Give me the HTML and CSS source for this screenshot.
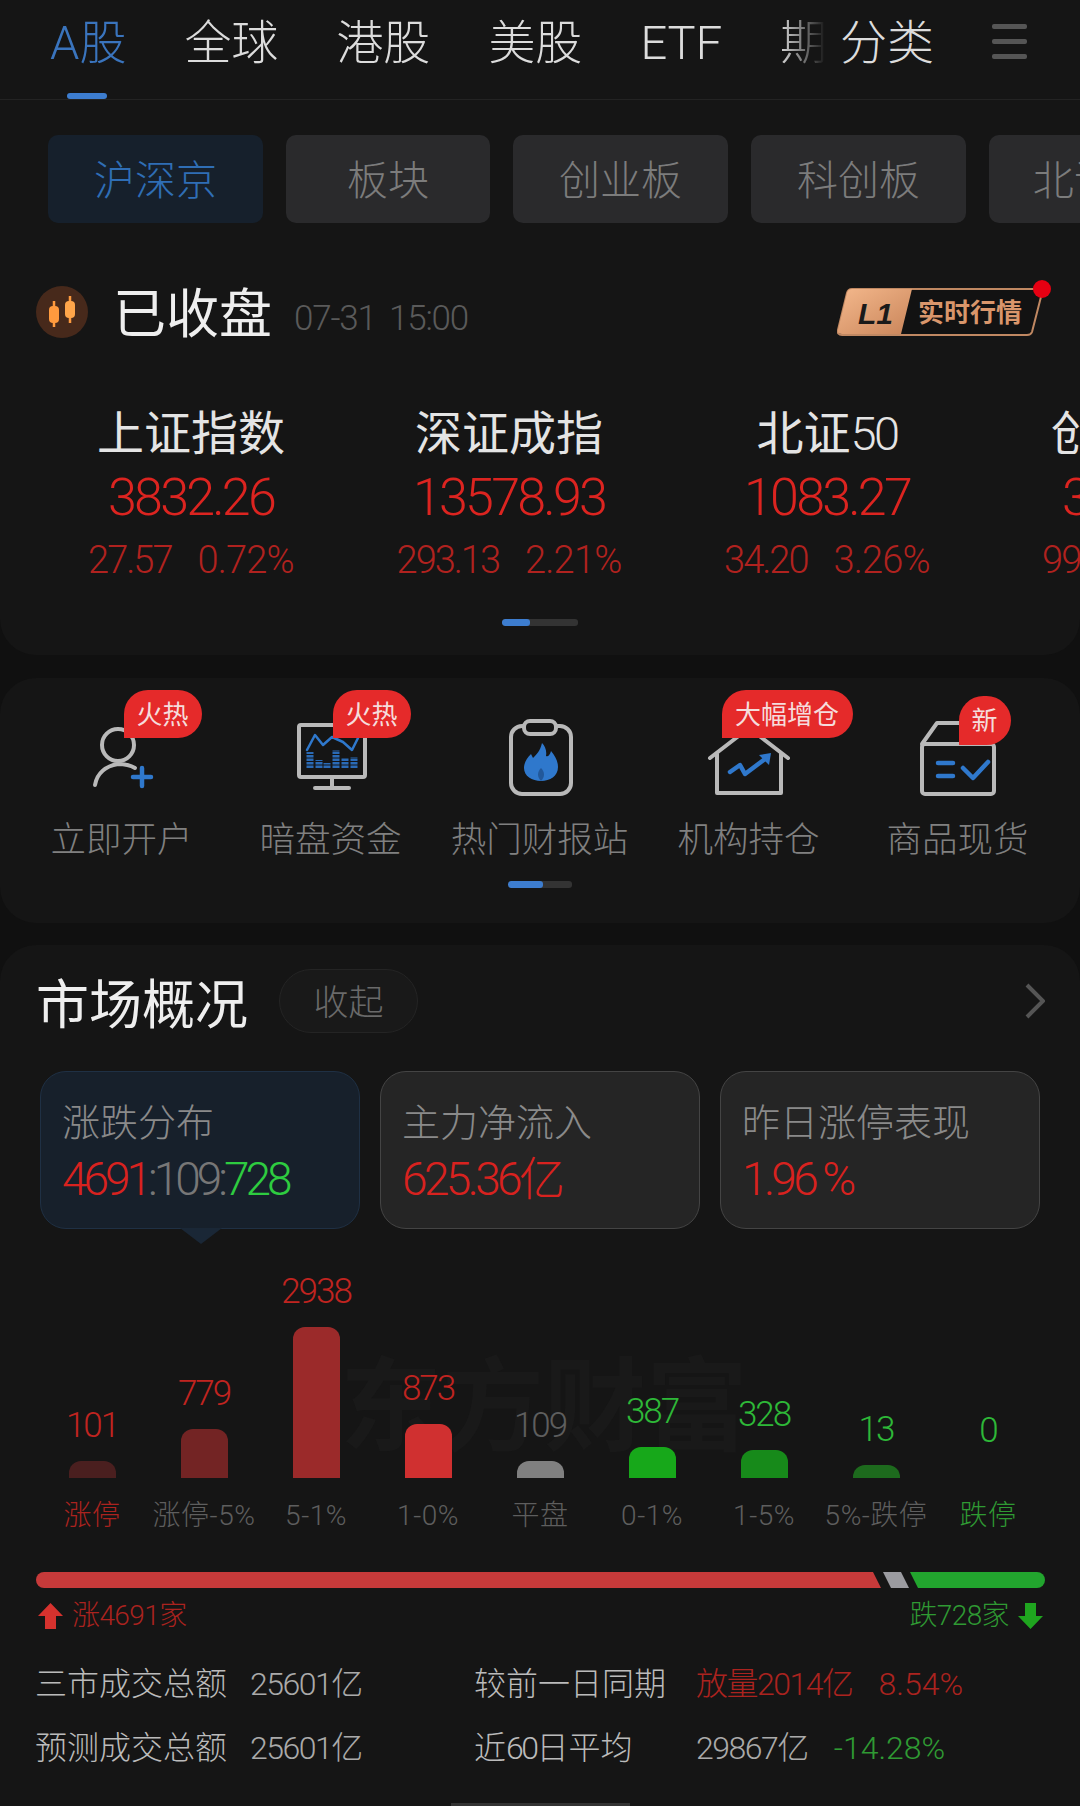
FILE: index.html
```html
<!DOCTYPE html>
<html lang="zh-CN">
<head>
    <meta charset="UTF-8">
    <meta name="viewport" content="width=device-width, initial-scale=1.0">
    <title>行情</title>
    <link rel="stylesheet" href="styles.css">
</head>
<body>
<div class="page">

    <!-- Index card -->
    <section class="card card-top">
        <nav class="market-tabs">
            <div class="tabs-scroll">
                <span class="tab active">A股</span>
                <span class="tab">全球</span>
                <span class="tab">港股</span>
                <span class="tab">美股</span>
                <span class="tab">ETF</span>
                <span class="tab">期货</span>
            </div>
            <span class="tab tab-more">分类</span>
            <div class="hamburger"><i></i><i></i><i></i></div>
        </nav>

        <div class="sub-tabs">
            <span class="sub-tab active">沪深京</span>
            <span class="sub-tab w-204">板块</span>
            <span class="sub-tab">创业板</span>
            <span class="sub-tab">科创板</span>
            <span class="sub-tab">北证50</span>
        </div>

        <div class="status">
            <svg class="candle-icon" viewBox="0 0 52 52">
                <circle cx="26" cy="26" r="26" fill="#47291b"/>
                <path d="M18 15V41M34 10V37" stroke="#ff9a3e" stroke-width="2.5"/>
                <rect x="13" y="20" width="10" height="17" rx="4" fill="#ff9a3e"/>
                <rect x="29" y="15" width="10" height="17" rx="4" fill="#ffa54a"/>
            </svg>
            <span class="status-text">已收盘</span>
            <span class="status-time">07-31 15:00</span>
            <svg class="l1-badge" viewBox="0 0 214 56">
                <defs>
                    <linearGradient id="l1fill" x1="0" y1="0" x2="1" y2="1">
                        <stop offset="0" stop-color="#f4b88c"/>
                        <stop offset="1" stop-color="#c9855a"/>
                    </linearGradient>
                </defs>
                <path d="M15 9H206L195 52Q194 55 190 55H5Q0 55 1 50L10 13Q11 9 15 9Z" fill="#121212" stroke="#c08862" stroke-width="2"/>
                <path d="M15 9H75L64 54H5Q0 54 1 50L10 13Q11 9 15 9Z" fill="url(#l1fill)"/>
                <text x="21" y="44" class="l1-mark">L1</text>
                <text x="81" y="42" class="l1-text">实时行情</text>
                <circle cx="205" cy="9" r="9" fill="#e60012"/>
            </svg>
        </div>

        <div class="indexes">
            <div class="index">
                <div class="index-name">上证指数</div>
                <div class="index-value">3832.26</div>
                <div class="index-change"><span>27.57</span><span>0.72%</span></div>
            </div>
            <div class="index">
                <div class="index-name">深证成指</div>
                <div class="index-value">13578.93</div>
                <div class="index-change"><span>293.13</span><span>2.21%</span></div>
            </div>
            <div class="index">
                <div class="index-name">北证<span class="tight">50</span></div>
                <div class="index-value">1083.27</div>
                <div class="index-change"><span>34.20</span><span>3.26%</span></div>
            </div>
            <div class="index">
                <div class="index-name">创业板指</div>
                <div class="index-value">3142.88</div>
                <div class="index-change"><span>99.18</span><span>3.26%</span></div>
            </div>
        </div>

        <div class="pager pager-wide"><i></i></div>
    </section>

    <!-- Shortcuts -->
    <section class="card card-nav">
        <div class="nav-grid">
            <div class="nav-item">
                <span class="badge">火热</span>
                <svg class="nav-icon" viewBox="0 0 100 80">
                    <circle cx="46" cy="27" r="16" class="line"/>
                    <path d="M23 67C25 55 34 48 46 46C52 46 58 47 63 50" class="line"/>
                    <path d="M61 59H79M70 50V68" class="blue"/>
                </svg>
                <span class="nav-label">立即开户</span>
            </div>
            <div class="nav-item">
                <span class="badge">火热</span>
                <svg class="nav-icon" viewBox="0 0 100 80">
                    <rect x="18" y="7" width="66" height="52" rx="2" class="line"/>
                    <path d="M51 59V70M34 70H68" class="line"/>
                    <path d="M26 32L34 17L42 27L51 19L62 24L71 32L77 20" class="blue thin"/>
                    <path d="M29 50V34M38 50V42M46 50V45M55 50V32M64 50V40M73 50V39" class="eq"/>
                </svg>
                <span class="nav-label">暗盘资金</span>
            </div>
            <div class="nav-item">
                <svg class="nav-icon" viewBox="0 0 100 80">
                    <rect x="21" y="8" width="60" height="68" rx="11" class="line"/>
                    <rect x="34" y="3" width="32" height="13" rx="6" class="line" fill="#151515"/>
                    <path d="M52 25C50 33 47 36 43 40L41 36C36 41 34 46 34 50C34 58 42 63 51 63C60 63 68 58 68 49C68 43 65 38 61 33C60 37 58 39 56 38C57 33 55 28 52 25Z" fill="#2f78cc"/>
                    <path d="M51 63C47 59 47 54 51 50C55 54 55 59 51 63Z" fill="#22589a"/>
                </svg>
                <span class="nav-label">热门财报站</span>
            </div>
            <div class="nav-item">
                <span class="badge badge-wide">大幅增仓</span>
                <svg class="nav-icon" viewBox="0 0 100 80">
                    <path d="M11 40L50 10L89 40M18 36V75H82V36" class="line"/>
                    <path d="M31 54L41 47L46 56L66 41" class="blue"/>
                    <path d="M60 37L72 35L70 47Z" fill="#2f78cc"/>
                </svg>
                <span class="nav-label">机构持仓</span>
            </div>
            <div class="nav-item">
                <span class="badge badge-new">新</span>
                <svg class="nav-icon" viewBox="0 0 100 80">
                    <rect x="14" y="26" width="72" height="50" rx="3" class="line"/>
                    <path d="M14 26L29 5H62" class="line"/>
                    <path d="M30 45H45M30 58H45M55 50L65 60L80 44" class="blue"/>
                </svg>
                <span class="nav-label">商品现货</span>
            </div>
        </div>
        <div class="pager pager-nav"><i></i></div>
    </section>

    <!-- Market overview -->
    <section class="card card-market">
        <header class="market-head">
            <h2>市场概况</h2>
            <span class="collapse-btn">收起</span>
            <svg class="chevron" viewBox="0 0 20 36"><path d="M2 2L18 18L2 34" fill="none" stroke="#555" stroke-width="4"/></svg>
        </header>

        <div class="stats">
            <div class="stat active">
                <div class="stat-title">涨跌分布</div>
                <div class="stat-value"><span class="red">4691</span><span class="gray">:109:</span><span class="green">728</span></div>
            </div>
            <div class="stat">
                <div class="stat-title">主力净流入</div>
                <div class="stat-value red">625.36亿</div>
            </div>
            <div class="stat">
                <div class="stat-title">昨日涨停表现</div>
                <div class="stat-value red">1.96<span class="pct">%</span></div>
            </div>
        </div>

        <div class="chart">
            <div class="watermark">东方财富</div>
            <div class="col"><span class="col-value c-red">101</span><i class="bar" style="height:17px;background:#4a1f1f"></i><span class="col-label c-red">涨停</span></div>
            <div class="col"><span class="col-value c-red">779</span><i class="bar" style="height:49px;background:#732424"></i><span class="col-label">涨停-5%</span></div>
            <div class="col"><span class="col-value c-red">2938</span><i class="bar" style="height:151px;background:#9b2a2a"></i><span class="col-label">5-1%</span></div>
            <div class="col"><span class="col-value c-red">873</span><i class="bar" style="height:54px;background:#d03030"></i><span class="col-label">1-0%</span></div>
            <div class="col"><span class="col-value c-gray">109</span><i class="bar" style="height:17px;background:#808080"></i><span class="col-label">平盘</span></div>
            <div class="col"><span class="col-value c-green">387</span><i class="bar" style="height:31px;background:#17a81a"></i><span class="col-label">0-1%</span></div>
            <div class="col"><span class="col-value c-green">328</span><i class="bar" style="height:28px;background:#178a1a"></i><span class="col-label">1-5%</span></div>
            <div class="col"><span class="col-value c-green">13</span><i class="bar" style="height:13px;background:#1d6a1d"></i><span class="col-label">5%-跌停</span></div>
            <div class="col"><span class="col-value c-green">0</span><i class="bar" style="height:12px"></i><span class="col-label c-green">跌停</span></div>
        </div>

        <div class="ratio-bar">
            <i class="ratio-up"></i>
            <i class="ratio-flat"></i>
            <i class="ratio-down"></i>
        </div>

        <div class="counts">
            <div class="count c-red">
                <svg class="arrow" viewBox="0 0 25 26"><path d="M12.5 0L25 13H18V26H7V13H0Z" fill="#d6322e"/></svg>
                <span>涨4691家</span>
            </div>
            <div class="count c-green">
                <span>跌728家</span>
                <svg class="arrow" viewBox="0 0 25 26"><path d="M12.5 26L25 13H18V0H7V13H0Z" fill="#1fa51f"/></svg>
            </div>
        </div>

        <div class="turnover">
            <span class="t-label">三市成交总额</span>
            <span class="t-num">25601亿</span>
            <span class="t-label">较前一日同期</span>
            <span class="t-num t-pair"><span class="c-red">放量2014亿</span><span class="c-red t-wide">8.54%</span></span>
            <span class="t-label">预测成交总额</span>
            <span class="t-num">25601亿</span>
            <span class="t-label">近<span class="tight">60</span>日平均</span>
            <span class="t-num t-pair"><span>29867亿</span><span class="c-green t-wide">-14.28%</span></span>
        </div>

        <div class="home-bar"></div>
    </section>
</div>
</body>
</html>
```

FILE: styles.css
```css
* {
    margin: 0;
    padding: 0;
    box-sizing: border-box;
}

body {
    background-color: #101010;
    color: #ddd;
    font-family: Roboto, "Noto Sans CJK SC", sans-serif;
    font-weight: 300;
}

i {
    display: block;
}

.page {
    width: 1080px;
    height: 1806px;
    overflow: hidden;
}

.card {
    background-color: #151515;
    border-radius: 36px;
}

.card-top {
    height: 655px;
    border-radius: 0 0 36px 36px;
    overflow: hidden;
}

.tight {
    font-weight: 300;
    letter-spacing: -2.5px;
}

/* top tabs */
.market-tabs {
    display: flex;
    height: 100px;
    padding-left: 50px;
    border-bottom: 1px solid #232323;
}

.tabs-scroll {
    display: flex;
    gap: 58px;
    width: 776px;
    overflow: hidden;
    -webkit-mask-image: linear-gradient(90deg, #000 94%, transparent 100%);
    mask-image: linear-gradient(90deg, #000 94%, transparent 100%);
}

.tab {
    position: relative;
    flex-shrink: 0;
    height: 99px;
    font-size: 47px;
    line-height: 86px;
    color: #dcdcdc;
    white-space: nowrap;
}

.tab.active {
    color: #3a74bd;
}

.tab.active::after {
    content: "";
    position: absolute;
    left: 17px;
    bottom: 0;
    width: 40px;
    height: 6px;
    border-radius: 3px;
    background-color: #3d7dcf;
}

.tab-more {
    margin-left: 14px;
}

.hamburger {
    display: flex;
    flex-direction: column;
    gap: 10px;
    width: 35px;
    margin-left: 58px;
    padding-top: 24px;
}

.hamburger i {
    height: 5px;
    border-radius: 2px;
    background-color: #555;
}

/* sub tabs */
.sub-tabs {
    display: flex;
    gap: 23px;
    margin-top: 35px;
    padding-left: 48px;
    overflow: hidden;
}

.sub-tab {
    flex-shrink: 0;
    width: 215px;
    height: 88px;
    border-radius: 10px;
    background-color: #2a2a2c;
    color: #7c7c7c;
    font-size: 41px;
    line-height: 92px;
    text-align: center;
}

.sub-tab.w-204 {
    width: 204px;
}

.sub-tab.active {
    background-color: #16202c;
    color: #2f6eb5;
}

/* status row */
.status {
    display: flex;
    align-items: center;
    height: 53px;
    margin-top: 62px;
    padding-left: 36px;
}

.candle-icon {
    width: 52px;
    height: 52px;
}

.status-text {
    margin-left: 25px;
    padding-top: 7px;
    font-size: 53px;
    font-weight: 400;
    line-height: 53px;
    color: #eee;
}

.status-time {
    margin-left: 22px;
    padding-top: 14px;
    font-size: 35px;
    letter-spacing: -1.2px;
    word-spacing: 6px;
    color: #5a5a5a;
}

.l1-badge {
    width: 214px;
    height: 56px;
    margin-left: auto;
    margin-right: 29px;
    margin-top: -8px;
}

.l1-mark {
    font: italic 700 30px "Liberation Sans", sans-serif;
    fill: #1a1a1a;
}

.l1-text {
    font: 700 26px "Noto Sans CJK SC", sans-serif;
    fill: #d9966b;
}

/* indexes */
.indexes {
    display: flex;
    margin-top: 67px;
    padding-left: 32px;
}

.index {
    flex-shrink: 0;
    width: 318px;
    text-align: center;
}

.index-name {
    padding-top: 1px;
    font-size: 47px;
    font-weight: 400;
    line-height: 55px;
    color: #e4e4e4;
    white-space: nowrap;
}

.index-value {
    font-size: 52px;
    line-height: 74px;
    letter-spacing: -2.8px;
    color: #dc2420;
}

.index-change {
    display: flex;
    justify-content: center;
    gap: 26px;
    font-size: 38px;
    line-height: 50px;
    letter-spacing: -2px;
    color: #b0221f;
}

.index-change span:last-child {
    letter-spacing: -0.8px;
}

/* small scroll indicator */
.pager {
    height: 7px;
    margin-left: auto;
    margin-right: auto;
    border-radius: 3px;
    background-color: #333;
    overflow: hidden;
}

.pager i {
    height: 100%;
    border-radius: 3px;
    background-color: #3d7dcf;
}

.pager-wide {
    width: 76px;
    margin-top: 34px;
}

.pager-wide i {
    width: 28px;
}

.pager-nav {
    width: 64px;
    margin-top: 19px;
}

.pager-nav i {
    width: 35px;
}

/* shortcuts */
.card-nav {
    height: 245px;
    margin-top: 23px;
    padding-top: 40px;
}

.nav-grid {
    display: grid;
    grid-template-columns: repeat(5, 209px);
    padding-left: 17px;
}

.nav-item {
    position: relative;
    display: flex;
    flex-direction: column;
    align-items: center;
}

.nav-icon {
    width: 100px;
    height: 80px;
}

.line {
    fill: none;
    stroke: #b9b9b9;
    stroke-width: 4;
    stroke-linecap: round;
    stroke-linejoin: round;
}

.line[fill] {
    fill: #151515;
}

.blue {
    fill: none;
    stroke: #2f78cc;
    stroke-width: 4.5;
    stroke-linecap: round;
    stroke-linejoin: round;
}

.blue.thin {
    stroke-width: 2.5;
}

.eq {
    fill: none;
    stroke: #2a6ab5;
    stroke-width: 7;
    stroke-dasharray: 2.5 1;
}

.nav-label {
    margin-top: 20px;
    font-size: 35.5px;
    line-height: 44px;
    color: #808080;
    white-space: nowrap;
}

.badge {
    position: absolute;
    z-index: 1;
    top: -28px;
    left: calc(50% + 2px);
    width: 78px;
    height: 48px;
    border-radius: 24px 24px 24px 0;
    background-color: #e52a2a;
    color: #f5dcdc;
    font-size: 26px;
    font-weight: 400;
    line-height: 50px;
    text-align: center;
    white-space: nowrap;
}

.badge-wide {
    left: calc(50% - 27px);
    width: 131px;
}

.badge-new {
    top: -22px;
    left: calc(50% + 1px);
    width: 52px;
    height: 49px;
    border-radius: 26px 26px 26px 0;
}

/* market overview */
.card-market {
    position: relative;
    height: 861px;
    margin-top: 22px;
    padding-top: 24px;
    border-radius: 36px 36px 0 0;
}

.market-head {
    display: flex;
    align-items: center;
    height: 64px;
    padding: 0 35px 0 36px;
}

.market-head h2 {
    font-size: 53px;
    font-weight: 400;
    color: #eee;
}

.collapse-btn {
    width: 139px;
    height: 64px;
    margin-left: 31px;
    border: 1px solid #242424;
    border-radius: 32px;
    background-color: #191919;
    color: #6a6a6a;
    font-size: 35px;
    line-height: 68px;
    text-align: center;
}

.chevron {
    width: 20px;
    height: 36px;
    margin-left: auto;
}

.stats {
    display: grid;
    grid-template-columns: repeat(3, 320px);
    gap: 20px;
    margin-top: 38px;
    padding-left: 40px;
}

.stat {
    position: relative;
    height: 158px;
    padding: 29px 0 0 21px;
    border: 1.5px solid #444;
    border-radius: 26px;
    background-color: #252525;
}

.stat.active {
    border-color: #1f3044;
    background-color: #17202b;
}

.stat.active::after {
    content: "";
    position: absolute;
    left: 139px;
    bottom: -16px;
    width: 42px;
    height: 16px;
    background-color: #1a2736;
    clip-path: polygon(0 0, 100% 0, 50% 100%);
}

.stat-title {
    font-size: 38px;
    line-height: 44px;
    color: #8a8a8a;
}

.stat-value {
    margin-top: 8px;
    font-size: 46px;
    line-height: 52px;
    letter-spacing: -4px;
}

.stat-value.red {
    letter-spacing: -3.6px;
}

.stat-value .pct {
    margin-left: 7px;
    letter-spacing: 0;
}

.red {
    color: #d8221f;
}

.gray {
    color: #777;
}

.green {
    color: #2ecc40;
}

.c-red {
    color: #ab231f;
}

.c-gray {
    color: #5e5e5e;
}

.c-green {
    color: #2f9a33;
}

/* distribution chart */
.chart {
    position: relative;
    display: flex;
    align-items: flex-end;
    height: 307px;
    padding-left: 36px;
}

.watermark {
    position: absolute;
    left: 340px;
    top: 127px;
    font-size: 102px;
    font-weight: 700;
    line-height: 104px;
    color: #191919;
    white-space: nowrap;
}

.col {
    position: relative;
    display: flex;
    flex-direction: column;
    align-items: center;
    width: 112px;
}

.col-value {
    margin-bottom: 15px;
    font-size: 35px;
    line-height: 40px;
    letter-spacing: -2px;
}

.col-value.c-green {
    color: #2eb838;
}

.col-value.c-red {
    color: #c02420;
}

.bar {
    width: 47px;
    border-radius: 12px 12px 0 0;
}

.col-label {
    margin-top: 18px;
    font-size: 28px;
    line-height: 40px;
    letter-spacing: 0.5px;
    color: #5e5e5e;
    white-space: nowrap;
}

.col-label.c-red {
    color: #ab231f;
}

.col-label.c-green {
    color: #2f9a33;
}

.ratio-bar {
    display: flex;
    height: 16px;
    margin: 36px 35px 0 36px;
}

.ratio-up {
    width: 845px;
    border-radius: 8px 0 0 8px;
    background-color: #c73a3a;
    clip-path: polygon(0 0, calc(100% - 8px) 0, 100% 100%, 0 100%);
}

.ratio-flat {
    width: 26px;
    margin-left: 2px;
    background-color: #9b9ba0;
    clip-path: polygon(0 0, calc(100% - 8px) 0, 100% 100%, 8px 100%);
}

.ratio-down {
    width: 135px;
    margin-left: 1px;
    border-radius: 0 8px 8px 0;
    background-color: #22a52e;
    clip-path: polygon(0 0, 100% 0, 100% 100%, 8px 100%);
}

.counts {
    display: flex;
    justify-content: space-between;
    margin-top: 8px;
    padding: 0 37px 0 38px;
}

.count {
    display: flex;
    align-items: center;
    gap: 9px;
    font-size: 28px;
    line-height: 40px;
    letter-spacing: -0.6px;
}

.arrow {
    width: 25px;
    height: 26px;
}

.turnover {
    display: grid;
    grid-template-columns: 215px 224px 222px auto;
    row-gap: 24px;
    margin-top: 28px;
    padding-left: 35px;
    font-size: 32px;
    line-height: 40px;
}

.t-label {
    color: #bbb;
}

.t-num {
    letter-spacing: -1.5px;
    color: #aaa;
}

.t-pair {
    display: flex;
    gap: 26px;
}

.t-wide {
    letter-spacing: 0;
}

.home-bar {
    position: absolute;
    left: 451px;
    bottom: 0;
    width: 179px;
    height: 3px;
    background-color: #333;
}
```
